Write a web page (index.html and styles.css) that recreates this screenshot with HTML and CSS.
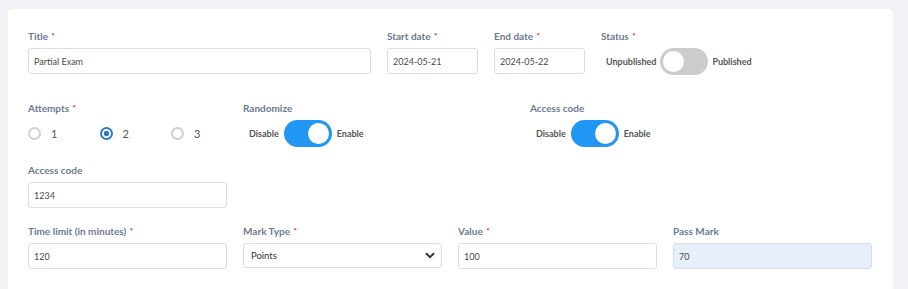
FILE: index.html
```html
<!DOCTYPE html>
<html lang="en">
<head>
  <meta charset="UTF-8"/>
  <meta name="viewport" content="width=device-width, initial-scale=1.0"/>
  <title>Edit Exam</title>
  <link rel="stylesheet" href="styles.css">
</head>
<body>
  <div class="card">
    <div class="row">
      <div class="field w-title">
        <label>Title <span class="req">*</span></label>
        <input type="text" value="Partial Exam"/>
      </div>
      <div class="field w-date">
        <label>Start date <span class="req">*</span></label>
        <input type="text" value="2024-05-21"/>
      </div>
      <div class="field w-date">
        <label>End date <span class="req">*</span></label>
        <input type="text" value="2024-05-22"/>
      </div>
      <div class="field">
        <label>Status <span class="req">*</span></label>
        <div class="switch-row status-row">
          <span>Unpublished</span>
          <span class="switch"><span class="knob"></span></span>
          <span>Published</span>
        </div>
      </div>
    </div>

    <div class="row row-2">
      <div class="field w-col3">
        <label>Attempts <span class="req">*</span></label>
        <div class="radios">
          <span class="radio-opt"><span class="radio"></span>1</span>
          <span class="radio-opt"><span class="radio checked"></span>2</span>
          <span class="radio-opt"><span class="radio"></span>3</span>
        </div>
      </div>
      <div class="field w-col4">
        <label>Randomize</label>
        <div class="switch-row">
          <span>Disable</span>
          <span class="switch on"><span class="knob"></span></span>
          <span>Enable</span>
        </div>
      </div>
      <div class="field w-col4">
        <label>Access code</label>
        <div class="switch-row">
          <span>Disable</span>
          <span class="switch on"><span class="knob"></span></span>
          <span>Enable</span>
        </div>
      </div>
    </div>

    <div class="row row-3">
      <div class="field w-col3">
        <label>Access code</label>
        <input type="text" value="1234"/>
      </div>
    </div>

    <div class="row row-4">
      <div class="field w-col3">
        <label>Time limit (in minutes) <span class="req">*</span></label>
        <input type="text" value="120"/>
      </div>
      <div class="field w-col3">
        <label>Mark Type <span class="req">*</span></label>
        <select>
          <option>Points</option>
          <option>Percentage</option>
        </select>
      </div>
      <div class="field w-col3">
        <label>Value <span class="req">*</span></label>
        <input type="text" value="100"/>
      </div>
      <div class="field w-col3">
        <label>Pass Mark</label>
        <input type="text" class="filled" value="70"/>
      </div>
    </div>
  </div>
</body>
</html>
```

FILE: styles.css
```css
:root {
  --label: #6c7a91;
  --border: #d9dde8;
  --blue: #2196f3;
}
* { margin:0; padding:0; box-sizing:border-box; }
body {
  font-family: Lato, 'Open Sans', sans-serif;
  background: #f2f3f7;
  padding: 9px 15px 0 8px;
  height: 289px;
  overflow: hidden;
}
.card {
  background: #fff;
  border-radius: 5px;
  padding: 20px 20px 40px 20px;
  min-height: 400px;
}
.row { display:flex; gap:16px; }
.row-2 { margin-top:26px; }
.row-3 { margin-top:16px; }
.row-4 { margin-top:16px; }

.field { display:flex; flex-direction:column; flex-shrink:0; }
.w-title { width:343px; }
.w-date { width:91px; }
.w-col3 { width:199px; }
.w-col4 { width:271px; }

label {
  display:block; height:14px; line-height:14px;
  font-size:10px; font-weight:700; color: var(--label);
  margin-bottom:5px;
}
.req { color:#e01818; font-size:8px; vertical-align:top; margin-left:1px; }

input, select {
  font-family: Lato, 'Open Sans', sans-serif;
  height:26px; width:100%;
  border:1px solid var(--border); border-radius:3px;
  padding:0 5px; font-size:9px; color:#4a4a4a;
  background:#fff; outline:none;
}
input.filled { background:#e8effc; border-color:#d6dceb; }
select {
  height:25px; padding:0 7px; color:#333; font-size:9.5px;
  appearance:none; -webkit-appearance:none;
  background: #fff url("data:image/svg+xml;utf8,<svg xmlns='http://www.w3.org/2000/svg' width='10' height='7' viewBox='0 0 10 7'><path d='M1 1.2l4 4 4-4' fill='none' stroke='%23333' stroke-width='2'/></svg>") no-repeat right 6px center;
}

.switch-row {
  display:flex; align-items:center; gap:5px;
  height:27px; padding-left:6px;
  font-size:9px; font-weight:700; color:#555;
}
.status-row { padding-left:5px; gap:4px; }
.switch {
  width:48px; height:27px; border-radius:14px;
  background:#cccccc; display:flex; align-items:center; padding:0 3px;
}
.switch .knob {
  width:21px; height:21px; border-radius:50%; background:#fff;
}
.switch.on { background: var(--blue); justify-content:flex-end; }

.radios {
  display:flex; align-items:center; height:27px;
}
.radio-opt {
  display:flex; align-items:center; gap:10px; flex-shrink:0;
  width:71.5px; font-size:11px; color:#555;
}
.radio {
  width:13px; height:13px; border-radius:50%;
  border:2px solid #cfcfcf; background:#fff;
}
.radio.checked {
  border-color:#2a7cc7;
  background: radial-gradient(circle, #2a7cc7 0 2.5px, #fff 3px);
}
```
